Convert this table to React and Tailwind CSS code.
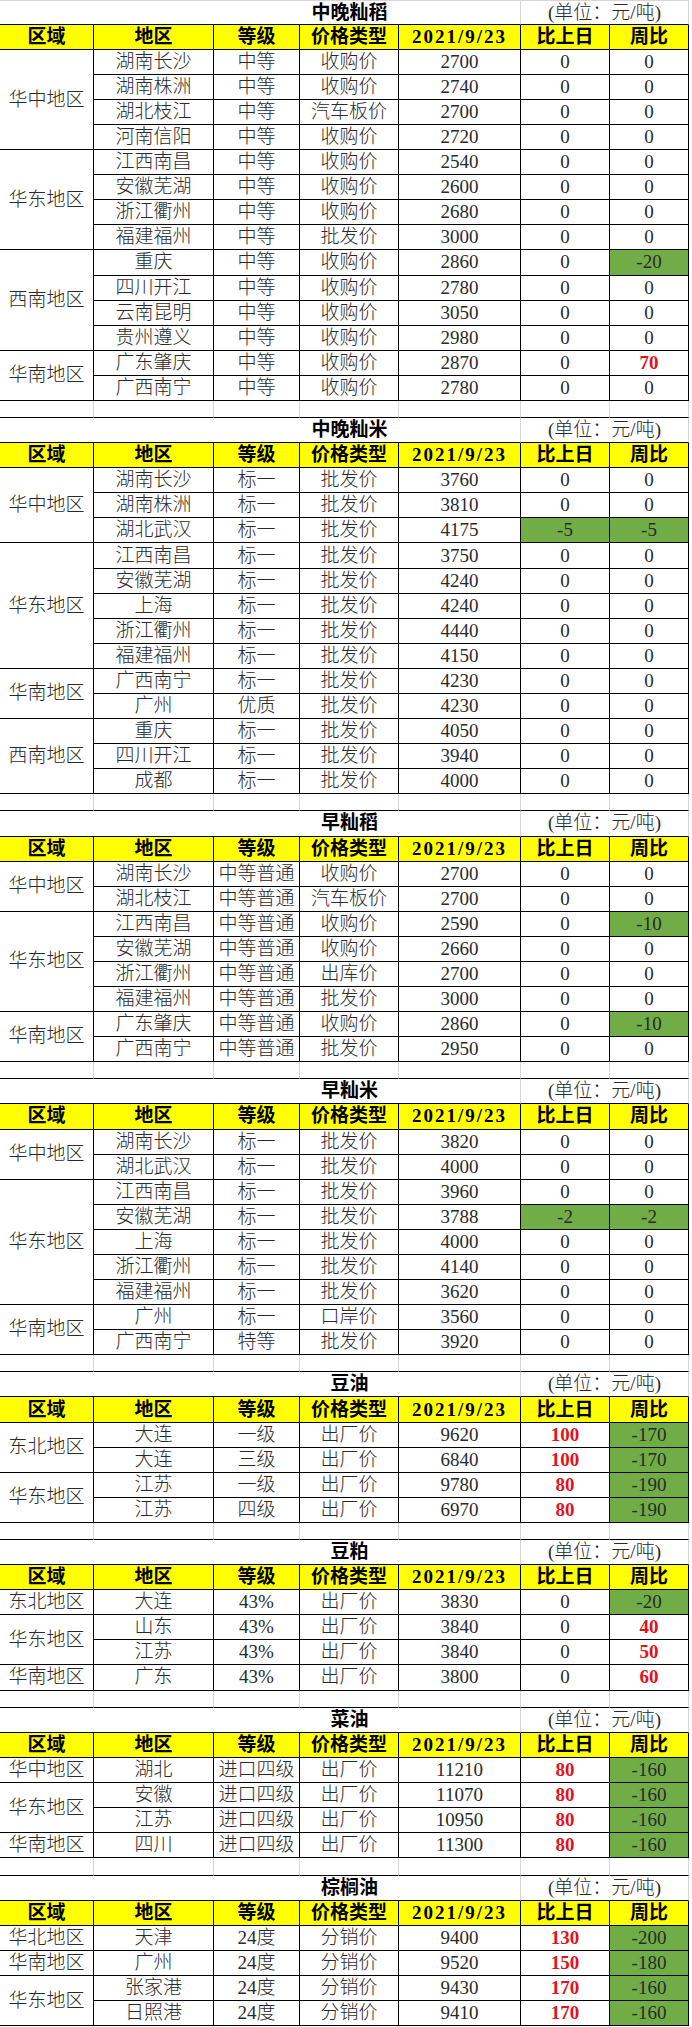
import React from 'react';

// 价格日报表：8 个品种，每个品种一张小表（标题行 + 黄色表头 + 数据 + 空行）
const UNIT = '(单位：元/吨)';
const HEAD = ['区域', '地区', '等级', '价格类型', '2021/9/23', '比上日', '周比'];

const sections = [
    {
        title: '中晚籼稻',
        groups: [
            { region: '华中地区', rows: [
                ['湖南长沙', '中等', '收购价', '2700', '0', '0'],
                ['湖南株洲', '中等', '收购价', '2740', '0', '0'],
                ['湖北枝江', '中等', '汽车板价', '2700', '0', '0'],
                ['河南信阳', '中等', '收购价', '2720', '0', '0'],
            ] },
            { region: '华东地区', rows: [
                ['江西南昌', '中等', '收购价', '2540', '0', '0'],
                ['安徽芜湖', '中等', '收购价', '2600', '0', '0'],
                ['浙江衢州', '中等', '收购价', '2680', '0', '0'],
                ['福建福州', '中等', '批发价', '3000', '0', '0'],
            ] },
            { region: '西南地区', rows: [
                ['重庆', '中等', '收购价', '2860', '0', '-20'],
                ['四川开江', '中等', '收购价', '2780', '0', '0'],
                ['云南昆明', '中等', '收购价', '3050', '0', '0'],
                ['贵州遵义', '中等', '收购价', '2980', '0', '0'],
            ] },
            { region: '华南地区', rows: [
                ['广东肇庆', '中等', '收购价', '2870', '0', '70'],
                ['广西南宁', '中等', '收购价', '2780', '0', '0'],
            ] },
        ],
    },
    {
        title: '中晚籼米',
        groups: [
            { region: '华中地区', rows: [
                ['湖南长沙', '标一', '批发价', '3760', '0', '0'],
                ['湖南株洲', '标一', '批发价', '3810', '0', '0'],
                ['湖北武汉', '标一', '批发价', '4175', '-5', '-5'],
            ] },
            { region: '华东地区', rows: [
                ['江西南昌', '标一', '批发价', '3750', '0', '0'],
                ['安徽芜湖', '标一', '批发价', '4240', '0', '0'],
                ['上海', '标一', '批发价', '4240', '0', '0'],
                ['浙江衢州', '标一', '批发价', '4440', '0', '0'],
                ['福建福州', '标一', '批发价', '4150', '0', '0'],
            ] },
            { region: '华南地区', rows: [
                ['广西南宁', '标一', '批发价', '4230', '0', '0'],
                ['广州', '优质', '批发价', '4230', '0', '0'],
            ] },
            { region: '西南地区', rows: [
                ['重庆', '标一', '批发价', '4050', '0', '0'],
                ['四川开江', '标一', '批发价', '3940', '0', '0'],
                ['成都', '标一', '批发价', '4000', '0', '0'],
            ] },
        ],
    },
    {
        title: '早籼稻',
        groups: [
            { region: '华中地区', rows: [
                ['湖南长沙', '中等普通', '收购价', '2700', '0', '0'],
                ['湖北枝江', '中等普通', '汽车板价', '2700', '0', '0'],
            ] },
            { region: '华东地区', rows: [
                ['江西南昌', '中等普通', '收购价', '2590', '0', '-10'],
                ['安徽芜湖', '中等普通', '收购价', '2660', '0', '0'],
                ['浙江衢州', '中等普通', '出库价', '2700', '0', '0'],
                ['福建福州', '中等普通', '批发价', '3000', '0', '0'],
            ] },
            { region: '华南地区', rows: [
                ['广东肇庆', '中等普通', '收购价', '2860', '0', '-10'],
                ['广西南宁', '中等普通', '批发价', '2950', '0', '0'],
            ] },
        ],
    },
    {
        title: '早籼米',
        groups: [
            { region: '华中地区', rows: [
                ['湖南长沙', '标一', '批发价', '3820', '0', '0'],
                ['湖北武汉', '标一', '批发价', '4000', '0', '0'],
            ] },
            { region: '华东地区', rows: [
                ['江西南昌', '标一', '批发价', '3960', '0', '0'],
                ['安徽芜湖', '标一', '批发价', '3788', '-2', '-2'],
                ['上海', '标一', '批发价', '4000', '0', '0'],
                ['浙江衢州', '标一', '批发价', '4140', '0', '0'],
                ['福建福州', '标一', '批发价', '3620', '0', '0'],
            ] },
            { region: '华南地区', rows: [
                ['广州', '标一', '口岸价', '3560', '0', '0'],
                ['广西南宁', '特等', '批发价', '3920', '0', '0'],
            ] },
        ],
    },
    {
        title: '豆油',
        groups: [
            { region: '东北地区', rows: [
                ['大连', '一级', '出厂价', '9620', '100', '-170'],
                ['大连', '三级', '出厂价', '6840', '100', '-170'],
            ] },
            { region: '华东地区', rows: [
                ['江苏', '一级', '出厂价', '9780', '80', '-190'],
                ['江苏', '四级', '出厂价', '6970', '80', '-190'],
            ] },
        ],
    },
    {
        title: '豆粕',
        groups: [
            { region: '东北地区', rows: [['大连', '43%', '出厂价', '3830', '0', '-20']] },
            { region: '华东地区', rows: [
                ['山东', '43%', '出厂价', '3840', '0', '40'],
                ['江苏', '43%', '出厂价', '3840', '0', '50'],
            ] },
            { region: '华南地区', rows: [['广东', '43%', '出厂价', '3800', '0', '60']] },
        ],
    },
    {
        title: '菜油',
        groups: [
            { region: '华中地区', rows: [['湖北', '进口四级', '出厂价', '11210', '80', '-160']] },
            { region: '华东地区', rows: [
                ['安徽', '进口四级', '出厂价', '11070', '80', '-160'],
                ['江苏', '进口四级', '出厂价', '10950', '80', '-160'],
            ] },
            { region: '华南地区', rows: [['四川', '进口四级', '出厂价', '11300', '80', '-160']] },
        ],
    },
    {
        title: '棕榈油',
        groups: [
            { region: '华北地区', rows: [['天津', '24度', '分销价', '9400', '130', '-200']] },
            { region: '华南地区', rows: [['广州', '24度', '分销价', '9520', '150', '-180']] },
            { region: '华东地区', rows: [
                ['张家港', '24度', '分销价', '9430', '170', '-160'],
                ['日照港', '24度', '分销价', '9410', '170', '-160'],
            ] },
        ],
    },
];

const cell = 'p-0 border-r border-b border-r-black border-b-black text-center align-middle whitespace-nowrap overflow-hidden';
const text = 'font-light text-[#2a2a2a]';

const ChangeCell = ({ value }) => {
    const n = Number(value);
    if (n < 0) {
        return <td className={`${cell} ${text} bg-[#70ad47]`}>{value}</td>;
    }
    if (n > 0) {
        return <td className={`${cell} font-bold text-[#e3121b]`}>{value}</td>;
    }
    return <td className={`${cell} ${text}`}>{value}</td>;
};

const Section = ({ section, first, last }) => (
    <>
        {/* 标题行 */}
        <tr className="h-[25.06px]">
            <td colSpan={3} className={`p-0 border-b border-b-black ${first ? 'border-t border-t-[#d6d6d6]' : ''}`} />
            <td className={`p-0 border-b border-b-black text-center font-bold whitespace-nowrap ${first ? 'border-t border-t-[#d6d6d6]' : ''}`}>
                {section.title}
            </td>
            <td className={`p-0 border-b border-r border-b-black border-r-[#d6d6d6] ${first ? 'border-t border-t-[#d6d6d6]' : ''}`} />
            <td colSpan={2} className={`p-0 border-b border-r border-b-black border-r-[#d6d6d6] text-center whitespace-nowrap ${text} ${first ? 'border-t border-t-[#d6d6d6]' : ''}`}>
                {UNIT}
            </td>
        </tr>
        {/* 表头 */}
        <tr className="h-[25.06px] bg-[#ffff00]">
            {HEAD.map((h, i) => (
                <td key={i} className={`${cell} font-bold text-black ${i === 4 ? 'tracking-[2px]' : ''}`}>{h}</td>
            ))}
        </tr>
        {section.groups.map((g) =>
            g.rows.map((r, i) => (
                <tr key={g.region + i} className="h-[25.06px]">
                    {i === 0 && (
                        <td rowSpan={g.rows.length} className={`${cell} ${text}`}>{g.region}</td>
                    )}
                    <td className={`${cell} ${text}`}>{r[0]}</td>
                    <td className={`${cell} ${text}`}>{r[1]}</td>
                    <td className={`${cell} ${text}`}>{r[2]}</td>
                    <td className={`${cell} ${text}`}>{r[3]}</td>
                    <ChangeCell value={r[4]} />
                    <ChangeCell value={r[5]} />
                </tr>
            ))
        )}
        {/* 空行 */}
        {!last && (
            <tr className="h-[17.5px]">
                {HEAD.map((h, i) => (
                    <td key={i} className="p-0 border-r border-b border-r-[#d6d6d6] border-b-black" />
                ))}
            </tr>
        )}
    </>
);

export default function App() {
    return (
        <div className="w-[692px] bg-white">
            <table className="table-fixed border-separate border-spacing-0 w-[689px] text-[19px] leading-[20px] font-['Liberation_Serif','Noto_Sans_CJK_SC',serif]">
                <colgroup>
                    <col className="w-[94px]" />
                    <col className="w-[120px]" />
                    <col className="w-[86px]" />
                    <col className="w-[99px]" />
                    <col className="w-[122px]" />
                    <col className="w-[89px]" />
                    <col className="w-[79px]" />
                </colgroup>
                <tbody>
                    {sections.map((s, i) => (
                        <Section key={s.title} section={s} first={i === 0} last={i === sections.length - 1} />
                    ))}
                </tbody>
            </table>
        </div>
    );
}
